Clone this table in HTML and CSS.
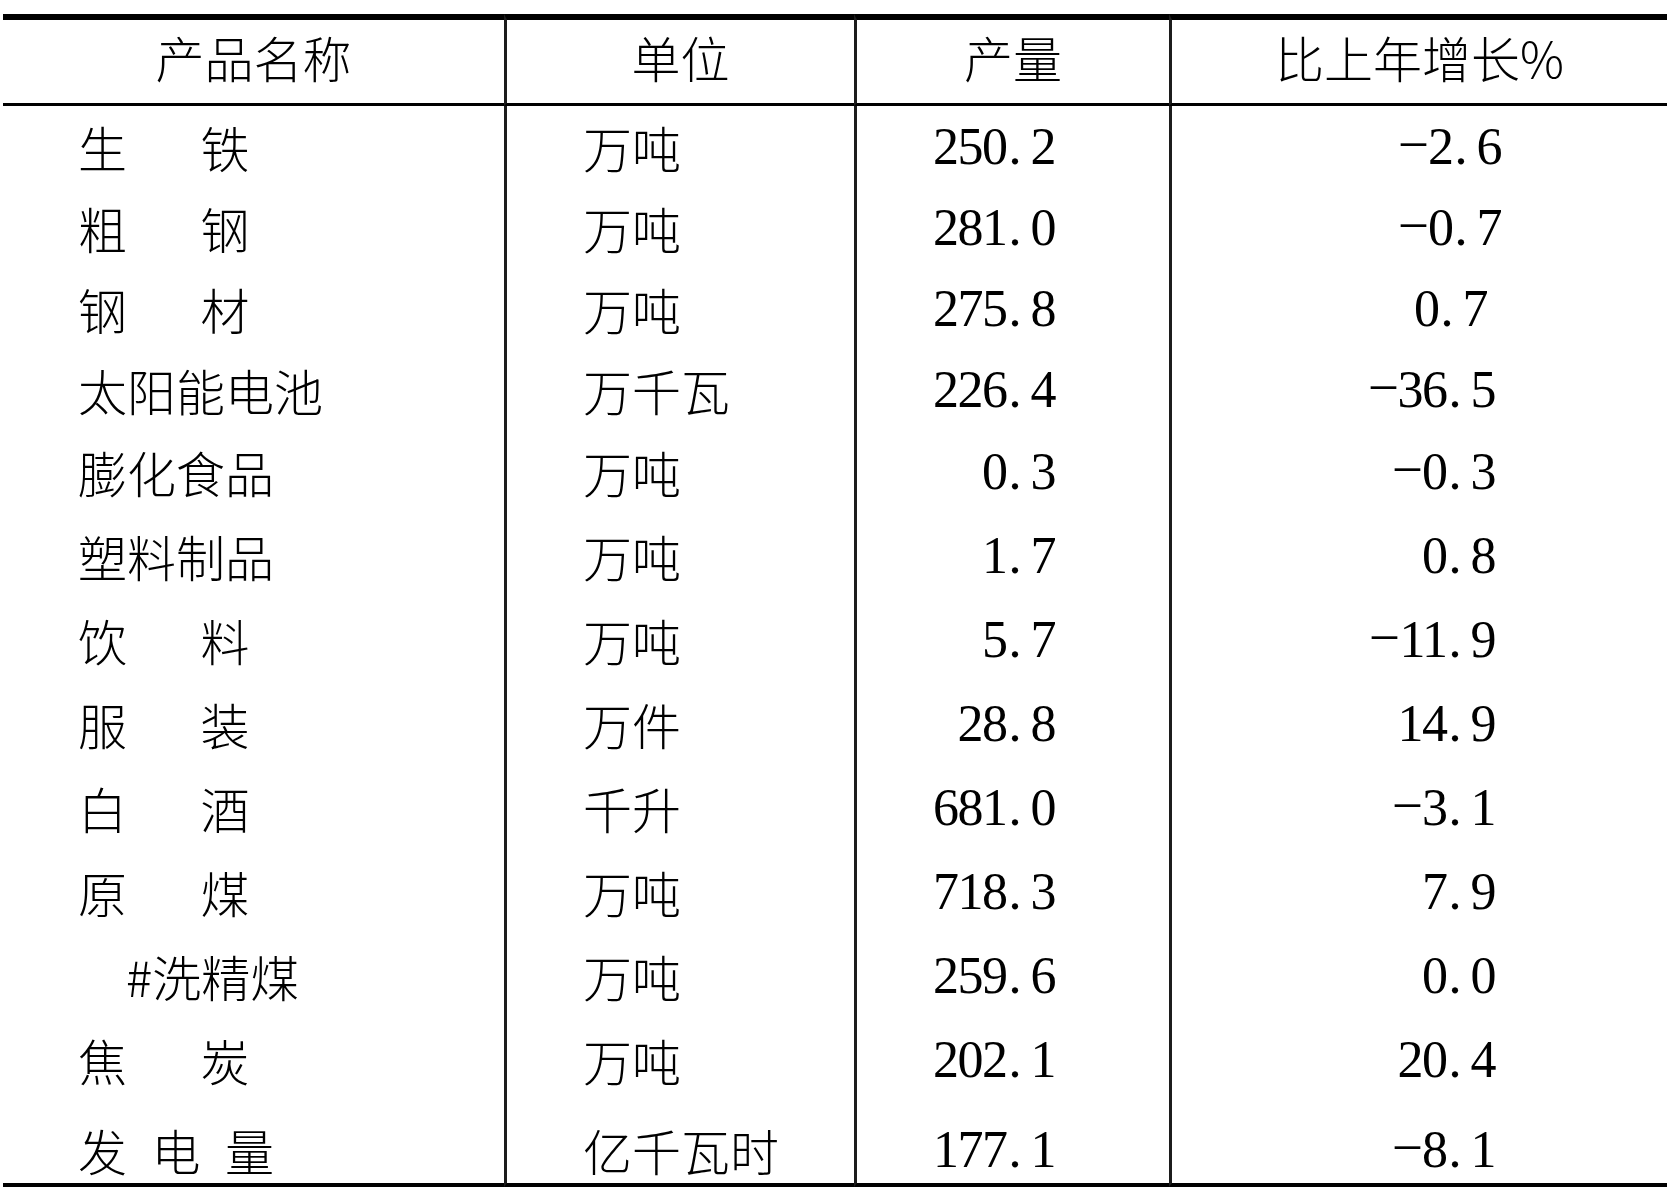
FILE: index.html
```html
<!DOCTYPE html>
<html lang="zh-CN">
<head>
<meta charset="utf-8">
<title>主要工业产品产量</title>
<link rel="stylesheet" href="styles.css">
</head>
<body>
<table class="stats">
  <colgroup><col class="c1"><col class="c2"><col class="c3"><col class="c4"></colgroup>
  <thead>
    <tr><th class="name">产品名称</th><th class="unit">单位</th><th class="qty">产量</th><th class="grow">比上年增长%</th></tr>
  </thead>
  <tbody>
    <tr class="first"><td class="name"><span class="spread">生铁</span></td><td class="unit">万吨</td><td class="qty">250<span class="pt">.</span>2</td><td class="grow wide"><span class="neg">-</span>2<span class="pt">.</span>6</td></tr>
    <tr class="tight"><td class="name"><span class="spread">粗钢</span></td><td class="unit">万吨</td><td class="qty">281<span class="pt">.</span>0</td><td class="grow wide"><span class="neg">-</span>0<span class="pt">.</span>7</td></tr>
    <tr class="tight"><td class="name"><span class="spread">钢材</span></td><td class="unit">万吨</td><td class="qty">275<span class="pt">.</span>8</td><td class="grow narrow">0<span class="pt">.</span>7</td></tr>
    <tr class="tight"><td class="name">太阳能电池</td><td class="unit">万千瓦</td><td class="qty">226<span class="pt">.</span>4</td><td class="grow"><span class="neg">-</span>36<span class="pt">.</span>5</td></tr>
    <tr class="loose"><td class="name">膨化食品</td><td class="unit">万吨</td><td class="qty">0<span class="pt">.</span>3</td><td class="grow"><span class="neg">-</span>0<span class="pt">.</span>3</td></tr>
    <tr class="loose"><td class="name">塑料制品</td><td class="unit">万吨</td><td class="qty">1<span class="pt">.</span>7</td><td class="grow">0<span class="pt">.</span>8</td></tr>
    <tr class="loose"><td class="name"><span class="spread">饮料</span></td><td class="unit">万吨</td><td class="qty">5<span class="pt">.</span>7</td><td class="grow"><span class="neg">-</span>11<span class="pt">.</span>9</td></tr>
    <tr class="loose"><td class="name"><span class="spread">服装</span></td><td class="unit">万件</td><td class="qty">28<span class="pt">.</span>8</td><td class="grow">14<span class="pt">.</span>9</td></tr>
    <tr class="loose"><td class="name"><span class="spread">白酒</span></td><td class="unit">千升</td><td class="qty">681<span class="pt">.</span>0</td><td class="grow"><span class="neg">-</span>3<span class="pt">.</span>1</td></tr>
    <tr class="loose"><td class="name"><span class="spread">原煤</span></td><td class="unit">万吨</td><td class="qty">718<span class="pt">.</span>3</td><td class="grow">7<span class="pt">.</span>9</td></tr>
    <tr class="loose"><td class="name sub">#洗精煤</td><td class="unit">万吨</td><td class="qty">259<span class="pt">.</span>6</td><td class="grow">0<span class="pt">.</span>0</td></tr>
    <tr class="loose"><td class="name"><span class="spread">焦炭</span></td><td class="unit">万吨</td><td class="qty">202<span class="pt">.</span>1</td><td class="grow">20<span class="pt">.</span>4</td></tr>
    <tr class="last"><td class="name"><span class="spread3">发电量</span></td><td class="unit">亿千瓦时</td><td class="qty">177<span class="pt">.</span>1</td><td class="grow"><span class="neg">-</span>8<span class="pt">.</span>1</td></tr>
  </tbody>
</table>
</body>
</html>
```
FILE: styles.css
```css
html, body {
  margin: 0;
  padding: 0;
  background: #fff;
}
body {
  overflow: hidden;
}
.stats {
  margin: 14px 0 0 3px;
  width: 1664px;
  border-collapse: separate;
  border-spacing: 0;
  table-layout: fixed;
  font-family: "Noto Sans CJK SC", "Noto Sans CJK JP", sans-serif;
  font-size: 49px;
  line-height: 49px;
  font-weight: 300;
  color: #000;
}
col.c1 { width: 501px; }
col.c2 { width: 350px; }
col.c3 { width: 315px; }
col.c4 { width: 498px; }

.stats th,
.stats td {
  padding: 0;
  box-sizing: border-box;
  white-space: nowrap;
  font-weight: 300;
}
.stats th {
  border-top: 6px solid #000;
  border-bottom: 3px solid #000;
  padding-top: 12px;
  padding-bottom: 22px;
  text-align: center;
}
.stats .unit,
.stats .qty,
.stats .grow {
  border-left: 3px solid #1c1c1c;
}
.stats td.name { padding-left: 75px; text-align: left; }
.stats td.sub { padding-left: 123px; }
.stats td.unit { padding-left: 76px; text-align: left; }
.stats td.qty,
.stats td.grow {
  text-align: right;
  font-family: "Liberation Serif", "Times New Roman", serif;
  font-size: 52px;
  letter-spacing: -1.5px;
}
.stats td.qty { padding-right: 114px; }
.stats td.grow { padding-right: 172px; }
.stats td.grow.wide { padding-right: 166px; }
.stats td.grow.narrow { padding-right: 180px; }

.spread { letter-spacing: 1.5em; }
.spread3 { letter-spacing: 0.5em; }

.pt {
  display: inline-block;
  width: 24px;
  padding-left: 2px;
  box-sizing: border-box;
  text-align: left;
  letter-spacing: 0;
}
.neg {
  display: inline-block;
  width: 29px;
  text-align: left;
  letter-spacing: 0;
  transform: translate(-2px, -6px) scale(1.9, 0.7);
  transform-origin: left center;
}

tr.first td { padding-top: 16px; padding-bottom: 20px; }
tr.tight td { padding-top: 12px; padding-bottom: 20px; }
tr.loose td { padding-top: 13px; padding-bottom: 22px; }
tr.last td { padding-top: 19px; padding-bottom: 9px; border-bottom: 4px solid #000; }
```
